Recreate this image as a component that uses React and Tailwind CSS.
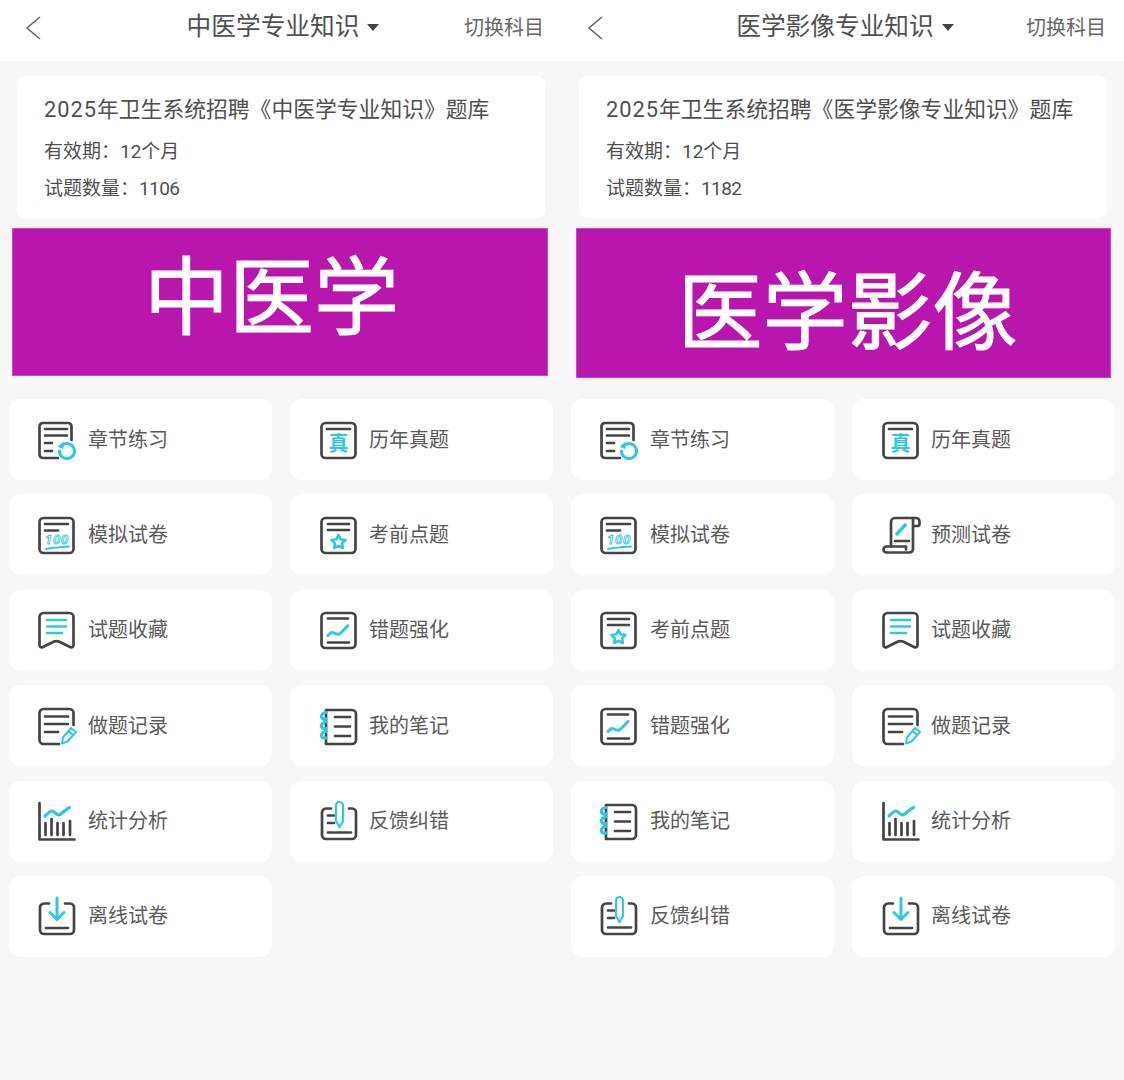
const dark = "#444444";
const cyan = "#2fc8de";

// 38x38 line icons, drawn in two colours
function Icon({ name }) {
  const d = { fill: "none", stroke: dark, strokeWidth: 2.7, strokeLinecap: "round", strokeLinejoin: "round" };
  const c = { fill: "none", stroke: cyan, strokeWidth: 2.6, strokeLinecap: "round", strokeLinejoin: "round" };
  const box = <rect x="1.500" y="2" width="34" height="35" rx="4" {...d} />;
  const art = {
    chapter: (
      <>
        <path d="M20 37H5a3.500 3.500 0 0 1-3.500-3.500V5.500A3.500 3.500 0 0 1 5 2h25a3.500 3.500 0 0 1 3.500 3.500V19" {...d} />
        <path d="M7 8h22M7 14.500h22M7 22h7M7 30h7" {...d} />
        <path d="M24 24.500a7.500 7.500 0 1 1-2.500 5.500" {...c} strokeWidth="3" />
        <path d="M20.500 25.500l4.500-4v6z" fill={cyan} stroke={cyan} strokeWidth="1" strokeLinejoin="round" />
      </>
    ),
    past: (
      <>
        {box}
        <path d="M7 8h23" {...d} />
        <text x="18.500" y="30" textAnchor="middle" fontSize="20" fontWeight="700" fill={cyan} fontFamily="'Noto Sans CJK SC', sans-serif">真</text>
      </>
    ),
    mock: (
      <>
        {box}
        <path d="M7 8h23M7 14.500h13" {...d} />
        <text x="7" y="28" fontSize="13" fontStyle="italic" fontWeight="700" fill="none" stroke={cyan} strokeWidth="0.900" fontFamily="Roboto, sans-serif" letterSpacing="0.800">100</text>
        <path d="M8 33c7-1.500 15-2 23-2.500" {...c} strokeWidth="1.800" />
      </>
    ),
    star: (
      <>
        {box}
        <path d="M8 8h21M8 14h21" {...d} />
        <path d="M18.500 19l2.200 4.300 4.800.7-3.500 3.300.8 4.700-4.300-2.200-4.300 2.200.8-4.700-3.500-3.300 4.800-.7z" {...c} />
      </>
    ),
    favorite: (
      <>
        <path d="M5.500 2h26a4 4 0 0 1 4 4v28c0 2-1.500 3-3.500 2l-10-5c-2-1-5-1-7 0l-10 5c-2 1-3.500 0-3.500-2V6a4 4 0 0 1 4-4z" {...d} />
        <path d="M9 9h19M9 15.500h19M9 22h15" {...c} />
      </>
    ),
    wrong: (
      <>
        {box}
        <path d="M8 7.500h20M8 31.500h21" {...d} />
        <path d="M8 24.500c2-2.500 4-3.500 6-2.500s4 2 6 .500 5-5 8-8" {...c} strokeWidth="3" />
      </>
    ),
    record: (
      <>
        <path d="M21 37H5.500a4 4 0 0 1-4-4V6a4 4 0 0 1 4-4h26a4 4 0 0 1 4 4v12" {...d} />
        <path d="M7 9.500h23M7 17h23M7 25h13" {...d} />
        <path d="M24 36.500l1-6 8-9.500 5 4-8.500 9.500zM30.500 24l4 3.500" {...c} strokeWidth="2" />
      </>
    ),
    notes: (
      <>
        <path d="M7 3h25a4 4 0 0 1 4 4v26a4 4 0 0 1-4 4H7" {...d} />
        <path d="M6 3v34" {...d} />
        <path d="M15 10h15M15 19.500h15M15 29h15" {...d} />
        <path d="M6 5.500C3 5.500 1 8 1.500 10c.5 2 3 2.500 4.500 2M6 15C3 15 1 17.500 1.500 19.500c.5 2 3 2.500 4.500 2M6 24.500c-3 0-5 2.500-4.500 4.500.5 2 3 2.500 4.500 2" {...c} strokeWidth="3.200" />
      </>
    ),
    stats: (
      <>
        <path d="M1.500 1v36.500h35" {...d} />
        <path d="M7.500 21v12M13.500 17v16M19.500 21v12M25.500 21v12M32 19v14" {...d} />
        <path d="M7 14c3-3 5-5 7-5s4.500 4 6.500 4 6-5 11-7.500" {...c} strokeWidth="3.200" />
      </>
    ),
    feedback: (
      <>
        <path d="M11 6.500H6a4 4 0 0 0-4 4V33a4 4 0 0 0 4 4h26a4 4 0 0 0 4-4V10.500a4 4 0 0 0-4-4h-3" {...d} />
        <path d="M8 13.500h6M8 21h6M8 30.500h23" {...d} />
        <path d="M16 3.500a3.500 3.500 0 0 1 7 0V19l-3.500 6-3.500-6z" fill="#fff" stroke={cyan} strokeWidth="2.200" strokeLinejoin="round" />
      </>
    ),
    forecast: (
      <>
        <path d="M9 30V6a4 4 0 0 1 4-4h21a3.500 3.500 0 0 1 3.500 3.500V8a2 2 0 0 1-2 2H32" {...d} />
        <path d="M31 3.500V33a3.500 3.500 0 0 1-3.500 3.500H4.500A3 3 0 0 1 1.500 33.500 3 3 0 0 1 4.500 30.500H24v3" {...d} />
        <path d="M13 25h14" {...d} />
        <path d="M14 19L24 8" {...c} strokeWidth="3.400" strokeLinecap="butt" />
      </>
    ),
    offline: (
      <>
        <path d="M11 6.500H6a4 4 0 0 0-4 4V33a4 4 0 0 0 4 4h26a4 4 0 0 0 4-4V10.500a4 4 0 0 0-4-4h-5" {...d} />
        <path d="M8 31h22" {...d} />
        <path d="M19 1v21M12 15.500l7 7 7-7" {...c} strokeWidth="3" />
      </>
    ),
  };
  return (
    <svg viewBox="0 0 38 38" className="w-[38px] h-[38px] shrink-0 overflow-visible">
      {art[name]}
    </svg>
  );
}

function MenuCard({ item }) {
  return (
    <div className="h-[81px] bg-white rounded-xl flex items-center pl-[29px] gap-[12px] even:pl-[30px] even:gap-[11px]">
      <Icon name={item[1]} />
      <span className="text-[20px] leading-none text-[#5a5a5a]">{item[0]}</span>
    </div>
  );
}

function Panel({ subject, total, banner, bannerClass, bannerTextClass, items }) {
  return (
    <div className="w-[562px] shrink-0">
      {/* 顶部导航 */}
      <div className="h-[61px] bg-white grid grid-cols-[1fr_auto_1fr] items-center pl-[25px] pr-[18px] pb-[6px]">
        <svg viewBox="0 0 16 24" className="w-[16px] h-[24px]" fill="none" stroke="#666" strokeWidth="1.600">
          <path d="M15 1L2 12l13 11" />
        </svg>
        <div className="flex items-center gap-[8px] text-[24.700px] leading-none text-[#505050] -ml-[3px]">
          <span>{subject}</span>
          <span className="w-0 h-0 border-x-[6px] border-x-transparent border-t-[7px] border-t-[#454545]"></span>
        </div>
        <span className="justify-self-end text-[20px] leading-none text-[#666]">切换科目</span>
      </div>

      {/* 题库信息 */}
      <div className="ml-[17px] mt-[15px] w-[528px] h-[142px] bg-white rounded-lg pl-[27px] pt-[21px] text-[#4f4f4f]">
        <div className="text-[21.800px] leading-[26px] whitespace-nowrap">
          <span className="tracking-[1px]">2025</span>年卫生系统招聘《{subject}》题库
        </div>
        <div className="mt-[16px] text-[19px] leading-[26px]">有效期：12个月</div>
        <div className="mt-[11px] text-[19px] leading-[26px]">
          试题数量：<span className="tracking-[-0.600px]">{total}</span>
        </div>
      </div>

      {/* 科目横幅 */}
      <div className={"mt-[10px] bg-[#b916ae] border border-[#c64bbd] flex items-center justify-center text-white leading-none [-webkit-text-stroke:1px_white] " + bannerClass}>
        <span className={bannerTextClass}>{banner}</span>
      </div>

      {/* 功能入口 */}
      <div className="ml-[9px] w-[544px] grid grid-cols-[263px_263px] gap-x-[18px] gap-y-[14.400px]">
        {items.map((item) => (
          <MenuCard key={item[0]} item={item} />
        ))}
      </div>
    </div>
  );
}

const leftItems = [
  ["章节练习", "chapter"],
  ["历年真题", "past"],
  ["模拟试卷", "mock"],
  ["考前点题", "star"],
  ["试题收藏", "favorite"],
  ["错题强化", "wrong"],
  ["做题记录", "record"],
  ["我的笔记", "notes"],
  ["统计分析", "stats"],
  ["反馈纠错", "feedback"],
  ["离线试卷", "offline"],
];

const rightItems = [
  ["章节练习", "chapter"],
  ["历年真题", "past"],
  ["模拟试卷", "mock"],
  ["预测试卷", "forecast"],
  ["考前点题", "star"],
  ["试题收藏", "favorite"],
  ["错题强化", "wrong"],
  ["做题记录", "record"],
  ["我的笔记", "notes"],
  ["统计分析", "stats"],
  ["反馈纠错", "feedback"],
  ["离线试卷", "offline"],
];

export default function App() {
  return (
    <div lang="zh-CN" className="w-[1124px] h-[1080px] overflow-hidden bg-[#f7f7f7] flex font-['Roboto','Noto_Sans_CJK_SC',sans-serif]">
      <Panel
        subject="中医学专业知识"
        total="1106"
        banner="中医学"
        bannerClass="ml-[12px] w-[536px] h-[148px] mb-[23px]"
        bannerTextClass="text-[85px] mr-[17px] mb-[6px]"
        items={leftItems}
      />
      <Panel
        subject="医学影像专业知识"
        total="1182"
        banner="医学影像"
        bannerClass="ml-[14px] w-[535px] h-[150px] mb-[21px]"
        bannerTextClass="text-[85px] ml-[8px] mt-[22px]"
        items={rightItems}
      />
    </div>
  );
}
